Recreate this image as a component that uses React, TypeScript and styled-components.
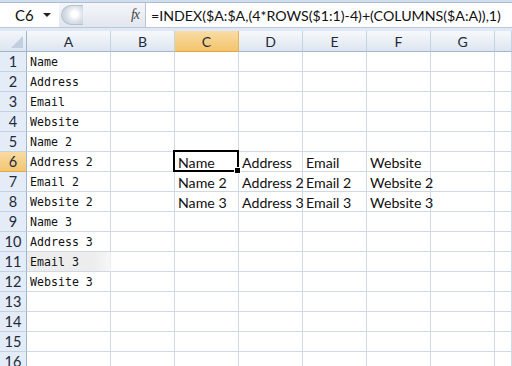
import styled, { createGlobalStyle, css } from 'styled-components';

const GlobalStyle = createGlobalStyle`
  html, body {
    margin: 0;
    padding: 0;
    background: #ffffff;
    overflow: hidden;
  }
  * {
    box-sizing: border-box;
  }
`;

const Window = styled.div`
  width: 512px;
  height: 366px;
  display: flex;
  flex-direction: column;
  background: #dfe8f4;
  font-family: Lato, 'Liberation Sans', sans-serif;
  overflow: hidden;
`;

const RibbonEdge = styled.div`
  flex-shrink: 0;
  height: 3px;
  background: #d2deee;
  border-bottom: 1px solid #a9bdd6;
`;

const FormulaBar = styled.div`
  flex-shrink: 0;
  height: 25px;
  display: flex;
  align-items: stretch;
  background: #ffffff;
  border-bottom: 1px solid #b9c9dd;
`;

const NameBox = styled.div`
  width: 58px;
  display: flex;
  align-items: center;
  justify-content: space-between;
  padding: 0 7px 0 15px;
  font-size: 15px;
  color: #111;
  background: #ffffff;
`;

const DropArrow = styled.span`
  width: 0;
  height: 0;
  border-left: 4px solid transparent;
  border-right: 4px solid transparent;
  border-top: 4px solid #222;
`;

const Splitter = styled.div`
  width: 88px;
  display: flex;
  align-items: center;
  justify-content: space-between;
  padding: 0 6px 0 0;
  background: linear-gradient(#f4f6f9, #e2e7ee);
  border-left: 1px solid #ffffff;
  border-right: 1px solid #b6c4d6;
`;

const Knob = styled.div`
  width: 22px;
  height: 20px;
  margin-left: 2px;
  border-radius: 10px 0 0 10px;
  border: 1px solid #b8c2cf;
  border-right: none;
  background: radial-gradient(circle at 60% 45%, #ffffff 0 3px, #e8ecf1 6px, #cdd5df 11px);
`;

const FxLabel = styled.span`
  font-family: 'Liberation Serif', serif;
  font-style: italic;
  font-size: 14px;
  color: #444;
  letter-spacing: -1px;
`;

const FormulaText = styled.div`
  flex: 1;
  display: flex;
  align-items: center;
  padding-left: 5px;
  font-size: 14.2px;
  color: #111;
  white-space: nowrap;
`;

const Gap = styled.div`
  flex-shrink: 0;
  height: 3px;
`;

const Sheet = styled.div`
  flex: 1;
  min-height: 0;
  overflow: hidden;
  display: grid;
  grid-template-columns: 27px 84px repeat(6, 64px) 1fr;
  grid-template-rows: 21px;
  grid-auto-rows: 20px;
  background: #ffffff;
`;

const headerBase = css`
  display: flex;
  align-items: center;
  justify-content: center;
  font-size: 14px;
  color: #1e2a3a;
  border-right: 1px solid #9eb6ce;
  border-bottom: 1px solid #9eb6ce;
`;

const Corner = styled.div`
  ${headerBase};
  position: relative;
  background: linear-gradient(#f3f6fa, #dde5ef);
  &::after {
    content: '';
    position: absolute;
    right: 3px;
    bottom: 3px;
    width: 0;
    height: 0;
    border-left: 12px solid transparent;
    border-bottom: 12px solid #c2cfe0;
  }
`;

const ColHeader = styled.div<{ $active?: boolean }>`
  ${headerBase};
  background: ${({ $active }) =>
    $active
      ? 'linear-gradient(#f9dda6, #f3c46c)'
      : 'linear-gradient(#f6f8fb 0%, #e9eef5 55%, #dde5ef 100%)'};
  border-right-color: ${({ $active }) => ($active ? '#e8b35a' : '#c5d2e2')};
  border-bottom-color: ${({ $active }) => ($active ? '#e0a844' : '#9eb6ce')};
`;

const RowHeader = styled.div<{ $active?: boolean }>`
  ${headerBase};
  font-size: 14.5px;
  background: ${({ $active }) => ($active ? 'linear-gradient(#f9dba2, #f3c673)' : '#e4ecf7')};
  border-bottom-color: ${({ $active }) => ($active ? '#e0a844' : '#c5d2e2')};
`;

const Cell = styled.div<{ $mono?: boolean; $shade?: boolean }>`
  position: relative;
  display: flex;
  align-items: center;
  padding: 1px 0 0 3px;
  white-space: nowrap;
  overflow: visible;
  border-right: 1px solid #d0d7e5;
  border-bottom: 1px solid #d0d7e5;
  color: #111;
  ${({ $mono }) =>
    $mono
      ? css`
          font-family: 'DejaVu Sans Mono', 'Liberation Mono', monospace;
          font-size: 11.6px;
        `
      : css`
          font-size: 14.2px;
        `}
  ${({ $shade }) =>
    $shade &&
    css`
      background: linear-gradient(90deg, #ededed 80%, #f7f7f7);
      border-right-color: transparent;
    `}
`;

const Selection = styled.div`
  position: absolute;
  inset: -2px -1px -1px -2px;
  border: 2px solid #000;
  pointer-events: none;
  z-index: 2;
  &::after {
    content: '';
    position: absolute;
    right: -4px;
    bottom: -4px;
    width: 5px;
    height: 5px;
    background: #000;
    border: 1px solid #fff;
  }
`;

const columns = ['A', 'B', 'C', 'D', 'E', 'F', 'G', ''];

const listA = [
  'Name',
  'Address',
  'Email',
  'Website',
  'Name 2',
  'Address 2',
  'Email 2',
  'Website 2',
  'Name 3',
  'Address 3',
  'Email 3',
  'Website 3',
];

const table: Record<number, string[]> = {
  6: ['Name', 'Address', 'Email', 'Website'],
  7: ['Name 2', 'Address 2', 'Email 2', 'Website 2'],
  8: ['Name 3', 'Address 3', 'Email 3', 'Website 3'],
};

const ROWS = 16;

export default function App() {
  return (
    <>
      <GlobalStyle />
      <Window>
        <RibbonEdge />
        <FormulaBar>
          <NameBox>
            <span>C6</span>
            <DropArrow />
          </NameBox>
          <Splitter>
            <Knob />
            <FxLabel>fx</FxLabel>
          </Splitter>
          <FormulaText>=INDEX($A:$A,(4*ROWS($1:1)-4)+(COLUMNS($A:A)),1)</FormulaText>
        </FormulaBar>
        <Gap />
        <Sheet>
          <Corner />
          {columns.map((c, i) => (
            <ColHeader key={i} $active={c === 'C'}>
              {c}
            </ColHeader>
          ))}
          {Array.from({ length: ROWS }, (_, r) => {
            const row = r + 1;
            const data = table[row] || [];
            return [
              <RowHeader key={`h${row}`} $active={row === 6}>
                {row}
              </RowHeader>,
              <Cell key={`a${row}`} $mono $shade={row === 11}>
                {listA[r] || ''}
              </Cell>,
              <Cell key={`b${row}`} />,
              ...[0, 1, 2, 3].map((k) => (
                <Cell key={`t${row}-${k}`}>
                  {data[k] || ''}
                  {row === 6 && k === 0 && <Selection />}
                </Cell>
              )),
              <Cell key={`g${row}`} />,
              <Cell key={`x${row}`} />,
            ];
          })}
        </Sheet>
      </Window>
    </>
  );
}
